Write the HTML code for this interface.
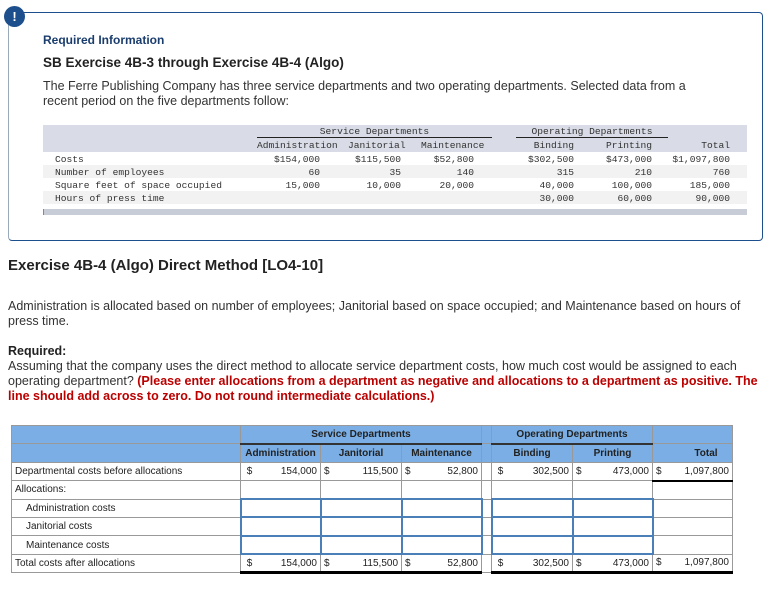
<!DOCTYPE html>
<html><head><meta charset="utf-8"><style>
*{margin:0;padding:0;box-sizing:border-box}
body{width:780px;height:595px;background:#fff;font-family:"Liberation Sans",sans-serif;color:#222;position:relative;overflow:hidden}
.a{position:absolute;white-space:nowrap}
.box{position:absolute;left:8px;top:12px;width:755px;height:229px;border:1px solid #1d4f8c;border-radius:4px;border-left-color:#9ab}
.ic{position:absolute;left:4px;top:6px;width:21px;height:21px;border-radius:50%;background:#1d4f8c;color:#fff;font-weight:bold;font-size:13px;text-align:center;line-height:21px}
.p{font-size:12.5px;letter-spacing:0;color:#333}
.m{font-family:"Liberation Mono",monospace;font-size:9.6px;color:#333}
.r{text-align:right}
table.t{position:absolute;left:11px;top:425px;border-collapse:collapse;font-size:10px;color:#222}
table.t td{border:1px solid #999;height:18.4px;padding:0 3px;vertical-align:middle}
.h td{background:#7aaee4}
.in{border:2px solid #4a7fb8 !important}
.n{display:flex;justify-content:space-between}
</style></head><body>
<div class="box"></div>
<div class="ic">!</div>
<div class="a" style="left:43px;top:33px;font-size:12px;font-weight:bold;color:#1a3d6e">Required Information</div>
<div class="a" style="left:43px;top:55px;font-size:13.5px;font-weight:bold;color:#222">SB Exercise 4B-3 through Exercise 4B-4 (Algo)</div>
<div class="a p" style="left:43px;top:79px">The Ferre Publishing Company has three service departments and two operating departments. Selected data from a</div>
<div class="a p" style="left:43px;top:94px">recent period on the five departments follow:</div>

<div class="a" style="left:43px;top:125px;width:704px;height:27px;background:#d9dce6"></div>
<div class="a" style="left:43px;top:165px;width:704px;height:13px;background:#f2f2f2"></div>
<div class="a" style="left:43px;top:191px;width:704px;height:13px;background:#f2f2f2"></div>
<div class="a" style="left:43px;top:209px;width:704px;height:6px;background:#c8ccd6;border-left:1px solid #888"></div>
<div class="a" style="left:257px;top:137px;width:235px;height:1px;background:#222"></div>
<div class="a" style="left:516px;top:137px;width:152px;height:1px;background:#222"></div>
<div class="a m" style="left:257px;top:126px;width:235px;text-align:center">Service Departments</div>
<div class="a m" style="left:516px;top:126px;width:152px;text-align:center">Operating Departments</div>
<div class="a m" style="left:257px;top:140px">Administration</div>
<div class="a m" style="left:348px;top:140px">Janitorial</div>
<div class="a m" style="left:421px;top:140px">Maintenance</div>
<div class="a m r" style="left:500px;top:140px;width:74px">Binding</div>
<div class="a m r" style="left:578px;top:140px;width:74px">Printing</div>
<div class="a m r" style="left:656px;top:140px;width:74px">Total</div>

<div class="a m" style="left:55px;top:153px;line-height:13px">Costs<br>Number of employees<br>Square feet of space occupied<br>Hours of press time</div>
<div class="a m r" style="left:240px;top:153px;width:80px;line-height:13px">$154,000<br>60<br>15,000<br>&nbsp;</div>
<div class="a m r" style="left:321px;top:153px;width:80px;line-height:13px">$115,500<br>35<br>10,000<br>&nbsp;</div>
<div class="a m r" style="left:394px;top:153px;width:80px;line-height:13px">$52,800<br>140<br>20,000<br>&nbsp;</div>
<div class="a m r" style="left:494px;top:153px;width:80px;line-height:13px">$302,500<br>315<br>40,000<br>30,000</div>
<div class="a m r" style="left:572px;top:153px;width:80px;line-height:13px">$473,000<br>210<br>100,000<br>60,000</div>
<div class="a m r" style="left:650px;top:153px;width:80px;line-height:13px">$1,097,800<br>760<br>185,000<br>90,000</div>

<div class="a" style="left:8px;top:257px;font-size:15px;font-weight:bold;color:#222">Exercise 4B-4 (Algo) Direct Method [LO4-10]</div>
<div class="a p" style="left:8px;top:299px">Administration is allocated based on number of employees; Janitorial based on space occupied; and Maintenance based on hours of</div>
<div class="a p" style="left:8px;top:314px">press time.</div>
<div class="a p" style="left:8px;top:344px;font-weight:bold;color:#222">Required:</div>
<div class="a p" style="left:8px;top:359px">Assuming that the company uses the direct method to allocate service department costs, how much cost would be assigned to each</div>
<div class="a p" style="left:8px;top:374px">operating department? <b style="color:#b00">(Please enter allocations from a department as negative and allocations to a department as positive. The</b></div>
<div class="a p" style="left:8px;top:389px;font-weight:bold;color:#b00">line should add across to zero. Do not round intermediate calculations.)</div>

<table class="t">
<colgroup><col style="width:229px"><col style="width:80px"><col style="width:81px"><col style="width:80px"><col style="width:10px"><col style="width:81px"><col style="width:80px"><col style="width:80px"></colgroup>
<tr class="h"><td></td><td colspan="3" style="text-align:center;font-weight:bold;border-bottom:2px solid #333">Service Departments</td><td></td><td colspan="2" style="text-align:center;font-weight:bold;border-bottom:2px solid #333">Operating Departments</td><td></td></tr>
<tr class="h" style="font-weight:bold"><td></td><td style="text-align:center">Administration</td><td style="text-align:center">Janitorial</td><td style="text-align:center">Maintenance</td><td></td><td style="text-align:center">Binding</td><td style="text-align:center">Printing</td><td style="text-align:center;padding-left:30px">Total</td></tr>
<tr><td>Departmental costs before allocations</td><td><div class="n"><span>&nbsp;$</span><span>154,000</span></div></td><td><div class="n"><span>$</span><span>115,500</span></div></td><td><div class="n"><span>$</span><span>52,800</span></div></td><td></td><td><div class="n"><span>&nbsp;$</span><span>302,500</span></div></td><td><div class="n"><span>$</span><span>473,000</span></div></td><td style="border-bottom:2px solid #000"><div class="n"><span>$</span><span>1,097,800</span></div></td></tr>
<tr><td>Allocations:</td><td></td><td></td><td></td><td></td><td></td><td></td><td></td></tr>
<tr><td style="padding-left:14px">Administration costs</td><td class="in"></td><td class="in"></td><td class="in"></td><td></td><td class="in"></td><td class="in"></td><td></td></tr>
<tr><td style="padding-left:14px">Janitorial costs</td><td class="in"></td><td class="in"></td><td class="in"></td><td></td><td class="in"></td><td class="in"></td><td></td></tr>
<tr><td style="padding-left:14px">Maintenance costs</td><td class="in"></td><td class="in"></td><td class="in"></td><td></td><td class="in"></td><td class="in"></td><td></td></tr>
<tr><td>Total costs after allocations</td><td style="border-bottom:3px solid #000"><div class="n"><span>&nbsp;$</span><span>154,000</span></div></td><td style="border-bottom:3px solid #000"><div class="n"><span>$</span><span>115,500</span></div></td><td style="border-bottom:3px solid #000"><div class="n"><span>$</span><span>52,800</span></div></td><td></td><td style="border-bottom:3px solid #000"><div class="n"><span>&nbsp;$</span><span>302,500</span></div></td><td style="border-bottom:3px solid #000"><div class="n"><span>$</span><span>473,000</span></div></td><td style="border-bottom:3px solid #000"><div class="n"><span>$</span><span>1,097,800</span></div></td></tr>
</table>
</body></html>
